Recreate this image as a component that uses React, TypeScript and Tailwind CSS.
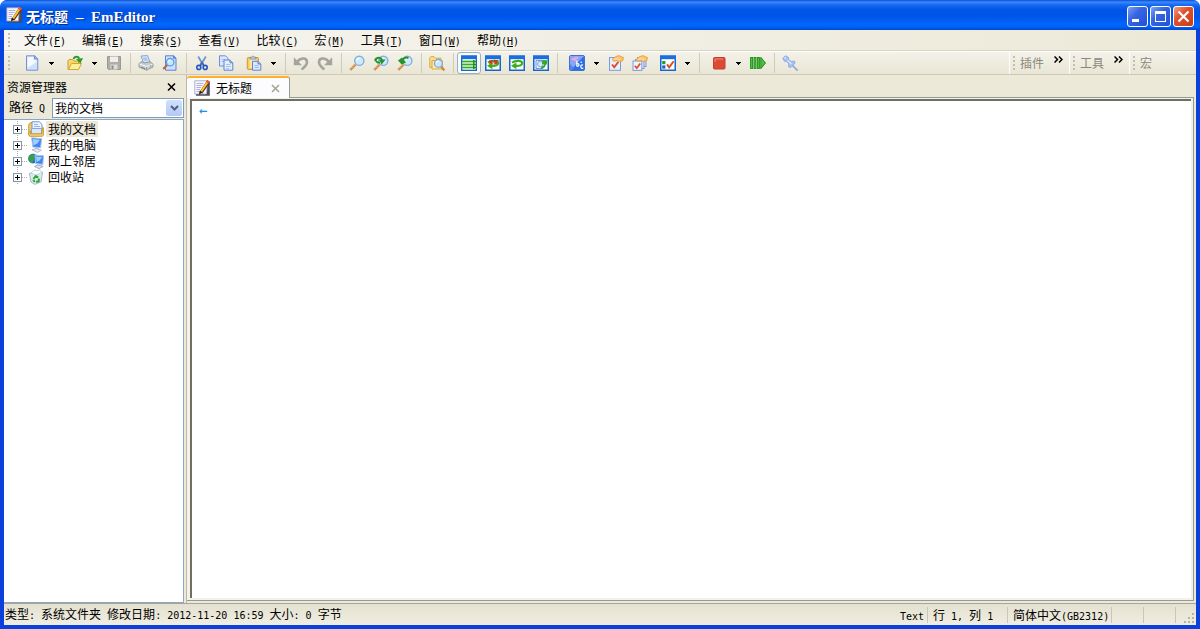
import React from "react";

type Kids = { children?: React.ReactNode };

function Svg({ children, size = 16 }: Kids & { size?: number }) {
  return (
    <svg width={size} height={size} viewBox="0 0 16 16" aria-hidden="true" className="shrink-0">
      {children}
    </svg>
  );
}

function AppIcon() {
  return (
    <Svg>
      <path d="M2 15.8 H15.8 V1.5 L13 1 V13.6 H2Z" fill="#4c4a58" />
      <path d="M.8 .8 H13.6 L12.4 14 H.8Z" fill="#f8f8ff" stroke="#a29cbc" strokeWidth=".8" />
      <path d="M2.5 3.5H9.5M2.5 5.5H8.5M2.5 7.5H7M2.5 9.5H6M2.5 11.5H5" stroke="#a9aee6" />
      <path d="M14.2 2 L7 12.6" stroke="#6c3010" strokeWidth="3.4" />
      <path d="M13.4 2.4 L7.2 11.4" stroke="#f8c62e" strokeWidth="1.9" />
      <path d="M12.6 .6 L15.4 2.6" stroke="#e8573c" strokeWidth="2.2" />
      <path d="M5.6 10.8 L8.2 12.8 L5 14.4Z" fill="#1a1a1a" />
    </Svg>
  );
}

function NewIcon() {
  return (
    <Svg>
      <path d="M2.5 .8 H10.5 L13.8 4 V15.2 H2.5Z" fill="#cfe0fd" stroke="#7394cf" />
      <path d="M3.5 2H9.5V5H12.5V7L3.5 13Z" fill="#f6faff" />
      <path d="M10.5 .8 V4 H13.8Z" fill="#a9c3f2" stroke="#7394cf" />
    </Svg>
  );
}

function OpenIcon() {
  return (
    <Svg>
      <path d="M1 14.5 V5.5 L2 4.5 H5.5 L7 6 H11.5 V14.5Z" fill="#f7d766" stroke="#c79f2e" />
      <path d="M1.5 14.5 L4.5 8.5 H14.5 L11.5 14.5Z" fill="#fdee9a" stroke="#cfa836" />
      <path d="M6.5 4 C7.5 1.2 11 .8 12.3 3.6" fill="none" stroke="#2d9a2a" strokeWidth="2" />
      <path d="M9 4 L16 3 L13.4 8.4Z" fill="#2d9a2a" />
    </Svg>
  );
}

function SaveIcon() {
  return (
    <Svg>
      <path d="M1.5 1.5 H14.5 V14.5 H2.5 L1.5 13.5Z" fill="#aeaea9" stroke="#9a9a95" />
      <path d="M4 1.5 H12 V7 H4Z" fill="#f0efea" />
      <path d="M4.5 9.5 H11.5 V14.5 H4.5Z" fill="#dedcd6" />
      <path d="M5.5 10.5 H7.5 V14 H5.5Z" fill="#8b8b87" />
    </Svg>
  );
}

function PrintIcon() {
  return (
    <Svg>
      <path d="M3 1 L9.5 .6 L12 7 L5.5 8Z" fill="#d6e8fc" stroke="#87a5cf" />
      <path d="M5 3.2H9M5.6 5H9.8" stroke="#8fb0dd" />
      <path d="M1 8.5 L4 6.5 L6 8 L12 6.8 L15 9 V12 L8.5 15.2 L1 12Z" fill="#c9cbcf" stroke="#96999f" />
      <path d="M1.5 9 L8.5 11.5 L14.5 9.2" fill="none" stroke="#f8f8f8" />
      <path d="M8.5 12 V14.5" stroke="#96999f" />
      <path d="M3 12.2 L7 13.6" stroke="#7c7f85" />
      <circle cx="12.5" cy="11" r=".8" fill="#5cb85c" />
    </Svg>
  );
}

function PreviewIcon() {
  return (
    <Svg>
      <path d="M3.5 .8 H11.5 L14 3.2 V15.2 H3.5Z" fill="#cfe0ff" stroke="#5d83cf" />
      <path d="M11.5 .8 V3.2 H14Z" fill="#8fb0ec" stroke="#5d83cf" />
      <path d="M1.2 14 L5.5 9.8" stroke="#b3683a" strokeWidth="2" />
      <circle cx="8.2" cy="7.2" r="3.7" fill="#c4eafc" stroke="#6a9cdc" strokeWidth="1.3" />
      <path d="M6.3 6.8 C6.5 5.6 7.5 5 8.6 5" fill="none" stroke="#fff" strokeWidth="1.2" />
    </Svg>
  );
}

function CutIcon() {
  return (
    <Svg>
      <path d="M4.2 1.5 L9.8 11 M11.8 1.5 L6.2 11" stroke="#6f97c8" strokeWidth="1.8" />
      <path d="M8 7 L10 10.8 M8 7 L6 10.8" stroke="#3a66b0" strokeWidth="1.6" />
      <circle cx="4.8" cy="12.4" r="2" fill="none" stroke="#2457c5" strokeWidth="1.6" />
      <circle cx="11.2" cy="12.4" r="2" fill="none" stroke="#2457c5" strokeWidth="1.6" />
    </Svg>
  );
}

function CopyIcon() {
  return (
    <Svg>
      <path d="M1.5 .8 H7.5 L10 3.3 V11 H1.5Z" fill="#dbe8ff" stroke="#6f90d6" />
      <path d="M3.5 4.5H7M3.5 6.5H6" stroke="#a9c1ef" />
      <path d="M6 5 H12 L14.8 7.8 V15.2 H6Z" fill="#e4eeff" stroke="#5f83cf" />
      <path d="M12 5 V7.8 H14.8" fill="#a9c1ef" stroke="#5f83cf" />
      <path d="M8 9.5H12.5M8 11.5H13M8 13.5H11" stroke="#a9c1ef" />
    </Svg>
  );
}

function PasteIcon() {
  return (
    <Svg>
      <rect x="1.3" y="2.5" width="11.2" height="12" rx="1" fill="#f4cc5c" stroke="#c99c3c" />
      <path d="M3.5 4 H10.5 V13 H3.5Z" fill="#fbe69c" />
      <path d="M4 4 V2.2 H5.6 L7 .8 L8.4 2.2 H10 V4Z" fill="#c9cdd6" stroke="#7d8596" strokeWidth=".8" />
      <path d="M6.5 6.3 H12 L14.8 9 V15.2 H6.5Z" fill="#dbe8ff" stroke="#5f83cf" />
      <path d="M12 6.3 V9 H14.8" fill="#a9c1ef" stroke="#5f83cf" />
      <path d="M8.5 10.5H12.5M8.5 12.5H13" stroke="#9cb8ec" />
    </Svg>
  );
}

function UndoIcon({ flip = false }: { flip?: boolean }) {
  return (
    <Svg>
      <g transform={flip ? "matrix(-1 0 0 1 16 0)" : undefined}>
        <path d="M4 7.5 C6.5 2.5 13.6 2.2 14 6.8 C14.2 10.5 11.5 12 8.6 14.4" fill="none" stroke="#a5a49e" strokeWidth="2.6" />
        <path d="M.8 2.2 V10.2 H9Z" fill="#a5a49e" />
      </g>
    </Svg>
  );
}

function Lens() {
  return (
    <>
      <path d="M1.2 14.8 L6.5 9.6" stroke="#d08a4a" strokeWidth="2.4" />
      <path d="M1.6 13.8 L5.8 9.6" stroke="#f4c490" strokeWidth=".8" />
      <circle cx="10.3" cy="5.8" r="4.6" fill="#cdeafd" stroke="#86aee2" strokeWidth="1.4" />
      <path d="M7.8 5.4 C8.1 3.8 9.4 3.2 10.6 3.3" fill="none" stroke="#fff" strokeWidth="1.4" />
    </>
  );
}

function FindIcon() {
  return <Svg><Lens /></Svg>;
}

function FindNextIcon() {
  return (
    <Svg>
      <Lens />
      <path d="M2 5.6 C3 2.4 7.6 1.4 9.2 5" fill="none" stroke="#25942a" strokeWidth="2" />
      <path d="M2.4 4.6 C3 7 5 8 7 7.4" fill="none" stroke="#25942a" strokeWidth="1.8" />
      <path d="M6 4.4 H12.6 L8.6 9.4Z" fill="#25942a" />
    </Svg>
  );
}

function FindPrevIcon() {
  return (
    <Svg>
      <Lens />
      <path d="M11.4 3 C8.4 1.8 5.8 3.4 5.4 6" fill="none" stroke="#25942a" strokeWidth="2" />
      <path d="M1 5.6 L5 2.6 L9 7.6 L4.6 9.6Z" fill="#25942a" />
    </Svg>
  );
}

function FindFilesIcon() {
  return (
    <Svg>
      <path d="M.8 12.5 V2.6 L1.8 1.6 H5 L6.4 3.2 H12 V12.5Z" fill="#fbe08a" stroke="#dba93c" />
      <path d="M3 14 V5.6 H13.4 V14Z" fill="#fdebae" stroke="#dba93c" />
      <path d="M15.4 15.4 L12 11.6" stroke="#c98448" strokeWidth="2.2" />
      <circle cx="9.4" cy="8.4" r="3.9" fill="#cdeafd" stroke="#7fa8de" strokeWidth="1.3" />
      <path d="M7.4 8 C7.6 6.8 8.6 6.2 9.6 6.2" fill="none" stroke="#fff" strokeWidth="1.2" />
    </Svg>
  );
}

function WindowBase({ children }: Kids) {
  return (
    <Svg>
      <rect x=".75" y="1.25" width="14.5" height="14" fill="#fff" stroke="#1765d0" strokeWidth="1.5" />
      <path d="M0 .5 H16 V4.2 H0Z" fill="#1a6ede" />
      {children}
    </Svg>
  );
}

function NoWrapIcon() {
  return (
    <WindowBase>
      <path d="M1.5 4.5 H14.5 V14.5 H1.5Z" fill="#d4f4cc" />
      <path d="M1 6.5 H15M1 9.5 H15M1 12.5 H15" stroke="#38a832" strokeWidth="1.3" />
      <path d="M12 4.7 L15.4 6.5 L12 8.2ZM12 7.8 L15.4 9.5 L12 11.2ZM12 10.8 L15.4 12.5 L12 14.2Z" fill="#1f8a24" />
    </WindowBase>
  );
}

function WrapArrow() {
  return (
    <>
      <path d="M3 7.6 C6.5 5.2 13 5.2 13.2 8.2 C13.2 10.6 10 11 6.5 10.8" fill="none" stroke="#3cae1e" strokeWidth="2.2" />
      <path d="M2 10.8 L7.4 7.4 V14.2Z" fill="#3cae1e" />
    </>
  );
}

function WrapCharsIcon() {
  return (
    <WindowBase>
      <WrapArrow />
      <path d="M4.5 5.5 L7.4 8.8M7.4 5.5 L4.5 8.8M8.8 5.6 H12 L9.8 7 C12.4 7 12.4 9 8.8 8.8" fill="none" stroke="#d2301c" strokeWidth="1.3" />
    </WindowBase>
  );
}

function WrapWindowIcon() {
  return <WindowBase><WrapArrow /></WindowBase>;
}

function WrapPageIcon() {
  return (
    <WindowBase>
      <path d="M3 5.4 H9.5 V13.6 H3Z" fill="#e7efff" stroke="#6c8fd6" />
      <circle cx="7.4" cy="9" r="2.8" fill="#cdeafd" stroke="#7fa8de" />
      <path d="M8.2 13 C10.8 12.4 12.2 10.8 12 8" fill="none" stroke="#38a820" strokeWidth="1.9" />
      <path d="M9 9 L9.6 5 L14.4 5.2 L13.8 9.6Z" fill="#38a820" />
    </WindowBase>
  );
}

function ConfigIcon() {
  return (
    <Svg>
      <rect x=".5" y=".5" width="15" height="15" rx="1.5" fill="#2c70e6" stroke="#3a72d8" />
      <path d="M1 1 H15 L9 7 L4 13 H1Z" fill="#8ea4f2" />
      <path d="M2.5 3 H5.5 V1.8 H9 V4 H7 V6 H4.5 V5 H2.5Z" fill="#dcaae4" />
      <path d="M1 9 L5 13 L3 15 H1Z" fill="#4f86ee" />
      <path d="M7.8 5.5 V11.5 M7.8 9 C10.4 7.4 11 11.6 7.8 11.2 M14 10 C11 9.2 11 14 14.2 13.2 M12.2 6.4 V8" fill="none" stroke="#fff" strokeWidth="1.2" />
    </Svg>
  );
}

function Hand() {
  return (
    <>
      <path d="M4 4.6 L7.6 1.6 L11 .6 L15.6 2.6 L14.6 6 L11.5 6.6 L9.5 5.2 L6 6.4Z" fill="#fcc56c" stroke="#e09a3c" strokeWidth=".8" />
      <path d="M6 4.6 L9.5 3 M9.5 4.8 L12 4" stroke="#fde6b4" />
    </>
  );
}

function PropsIcon() {
  return (
    <Svg>
      <rect x="1.5" y="2.5" width="11" height="12.8" fill="#e6efff" stroke="#7b9ade" />
      <path d="M4 9.5 L6.3 12.3 L10.4 6.8" fill="none" stroke="#e04a20" strokeWidth="1.9" />
      <Hand />
    </Svg>
  );
}

function AllPropsIcon() {
  return (
    <Svg>
      <rect x="5.5" y="2.5" width="8.5" height="9" fill="#dbe6fc" stroke="#7b9ade" />
      <rect x="3.5" y="4.5" width="8.5" height="9" fill="#dbe6fc" stroke="#7b9ade" />
      <rect x="1" y="6" width="8.8" height="9.4" fill="#eef4ff" stroke="#7b9ade" />
      <path d="M2.8 10.8 L4.8 13.2 L8.2 8.4" fill="none" stroke="#e04a20" strokeWidth="1.7" />
      <Hand />
    </Svg>
  );
}

function CustomizeIcon() {
  return (
    <WindowBase>
      <rect x="2.2" y="6" width="3.2" height="3.2" fill="#1d9c2a" />
      <rect x="2.2" y="10.4" width="3.2" height="3.2" fill="#1765d0" />
      <path d="M7 9.4 L9.2 12.4 L13.6 6.2" fill="none" stroke="#e04a20" strokeWidth="1.9" />
    </WindowBase>
  );
}

function RecordIcon() {
  return (
    <Svg>
      <rect x="2.5" y="2.5" width="11.5" height="11.5" rx="1" fill="#dc4a34" stroke="#c0402c" />
      <path d="M4 7 V4 H12" fill="none" stroke="#f08c78" />
    </Svg>
  );
}

function RunIcon() {
  return (
    <Svg>
      <rect x=".6" y="2.5" width="2" height="11" fill="#4fc43c" stroke="#1f8a1c" strokeWidth=".9" />
      <rect x="4" y="2.5" width="2" height="11" fill="#4fc43c" stroke="#1f8a1c" strokeWidth=".9" />
      <rect x="7.4" y="2.5" width="2" height="11" fill="#4fc43c" stroke="#1f8a1c" strokeWidth=".9" />
      <path d="M10.8 2.3 L15.5 8 L10.8 13.7Z" fill="#4fc43c" stroke="#1f8a1c" />
    </Svg>
  );
}

function PinIcon() {
  return (
    <Svg>
      <path d="M10 10 L15.6 15.6" stroke="#8fa6cf" strokeWidth="1.6" />
      <path d="M.8 3.2 L3.6 .8 L6.6 2.6 L6.2 4.4 L9.4 6.4 L12.4 6.2 L13.2 8 L8.6 12.6 L6.6 11.8 L6.8 8.8 L4.4 6.4 L2.4 6.2Z" fill="#a5c2f6" stroke="#86a6e4" strokeWidth=".9" />
      <path d="M2.6 3.4 L4 2.2 M5.6 5.4 L9.4 9" stroke="#e3edff" strokeWidth="1.3" />
    </Svg>
  );
}

function DocumentsIcon() {
  return (
    <Svg>
      <path d="M.8 14 V3.5 L2.6 1.6 H5 V14Z" fill="#f5cf62" stroke="#c4942a" />
      <path d="M4 .8 H11.4 L14 3.4 V10 H4Z" fill="#eef5ff" stroke="#6f94cf" />
      <path d="M6 3.5H10M6 5.5H12" stroke="#8fb3ea" />
      <path d="M3.5 7.5 H13.5 V13 H3.5Z" fill="#d8e8fc" stroke="#86a8dc" />
      <path d="M.8 11.5 L2.5 10 V12.8 H14 V7.5 L15.4 6.5 V14 L14.4 15.3 H1.6 L.8 14Z" fill="#f8d268" stroke="#c4942a" strokeWidth=".9" />
    </Svg>
  );
}

function ComputerIcon() {
  return (
    <Svg>
      <path d="M3.6 .8 L13.6 1.6 L12.6 10.8 L4.8 10Z" fill="#3f86f0" stroke="#b0c2e4" />
      <path d="M4.8 2 L12 2.8 L9.4 6.6 L5.4 8.4Z" fill="#9ccfff" />
      <path d="M7.2 10.6 L10.8 10.9 V12.4 H7.2Z" fill="#c5cbd8" />
      <path d="M4 12.8 L8 11.6 L13.5 13.2 L9.5 15.4Z" fill="#e8ecf4" stroke="#a4b0c6" strokeWidth=".8" />
    </Svg>
  );
}

function NetworkIcon() {
  return (
    <Svg>
      <circle cx="5" cy="5.6" r="4.9" fill="#2374d0" />
      <path d="M1 4 C3 .6 6.4 1 7 3.6 C5 5.5 6.4 8 3.8 10 C1.6 8.6 .4 6.4 1 4Z" fill="#38a636" />
      <path d="M7 2 L15.6 2.8 L14.8 11.4 L7.6 10.6Z" fill="#3f86f0" stroke="#b2c4e4" />
      <path d="M8 3.4 L14.2 4 L11.4 7.8 L8.6 9Z" fill="#9ccfff" />
      <path d="M6.5 13.4 L10 12 L15.2 13.4 L11 15.6Z" fill="#e0e5ef" stroke="#8c9ab4" strokeWidth=".8" />
    </Svg>
  );
}

function RecycleIcon() {
  return (
    <Svg>
      <path d="M1.4 4.5 L8 3 L14.6 3 L13 12.8 L6.8 15.4 L3 13Z" fill="#d9edf0" stroke="#a4bac8" />
      <path d="M3 4 L6.6 .8 L9 1.8 L12 .8 L13.8 3.6 L8 6.2Z" fill="#fff" stroke="#b9cad4" strokeWidth=".8" />
      <path d="M5.4 10 L7.8 7 L10.2 8.6 M11 9.6 L10.6 12.4 L8 12.8 M6.8 13 L5.2 11" fill="none" stroke="#2fa52e" strokeWidth="2" />
    </Svg>
  );
}

function Caret() {
  return (
    <svg width="5" height="3" viewBox="0 0 5 3" aria-hidden="true">
      <path d="M0 0H5V1H4V2H3V3H2V2H1V1H0Z" fill="#000" />
    </svg>
  );
}

function Grip() {
  return (
    <svg width="2" height="14" viewBox="0 0 2 14" aria-hidden="true" className="shrink-0">
      {[0, 4, 8, 12].map((y) => (
        <rect key={y} x="0" y={y} width="2" height="2" fill="#c2bfb2" />
      ))}
    </svg>
  );
}

function Tool({ label, children, on = false }: Kids & { label: string; on?: boolean }) {
  return (
    <button
      type="button"
      aria-label={label}
      aria-pressed={on || undefined}
      className={
        on
          ? "flex h-[22px] w-6 items-center justify-center rounded-[3px] border border-[#98b0c8] bg-[#fbfbf8]"
          : "flex h-[22px] w-6 items-center justify-center"
      }
    >
      {children}
    </button>
  );
}

function Split({ label, children }: Kids & { label: string }) {
  return (
    <div className="flex pr-px pl-1">
      <Tool label={label}>{children}</Tool>
      <button type="button" aria-label={label + "选项"} className="flex w-[14px] items-center justify-center">
        <Caret />
      </button>
    </div>
  );
}

function Sep() {
  return (
    <div className="flex w-2 justify-center">
      <div className="h-5 w-px bg-[#cfccbc]" />
    </div>
  );
}

function Latin({ children }: Kids) {
  return <span className="font-['DejaVu_Sans_Mono',monospace] text-[10px]">{children}</span>;
}

const menus: [string, string][] = [
  ["文件", "F"],
  ["编辑", "E"],
  ["搜索", "S"],
  ["查看", "V"],
  ["比较", "C"],
  ["宏", "M"],
  ["工具", "T"],
  ["窗口", "W"],
  ["帮助", "H"],
];

const places = [
  { name: "我的文档", icon: <DocumentsIcon />, selected: true },
  { name: "我的电脑", icon: <ComputerIcon />, selected: false },
  { name: "网上邻居", icon: <NetworkIcon />, selected: false },
  { name: "回收站", icon: <RecycleIcon />, selected: false },
];

function TitleBar() {
  return (
    <header className="flex h-[30px] shrink-0 items-center rounded-t-[7px] bg-[linear-gradient(to_bottom,#0a4bd0_0px,#3a8bff_2px,#1668f2_5px,#0055e5_10px,#0056ea_17px,#0066fb_24px,#0062f6_27px,#0046d0_30px)] pr-[6px] pl-[6px] text-white">
      <AppIcon />
      <h1 className="flex-1 pt-[2px] pl-1 leading-4 font-bold [text-shadow:1px_1px_0_#0a2f8c]">
        <span className="text-[14px]">无标题</span>
        <span className="pl-2 font-['Liberation_Serif',serif] text-[15px]">–&nbsp; EmEditor</span>
      </h1>
      <div className="flex gap-[2px] pt-[2px]">
        <button type="button" aria-label="最小化" className="h-[21px] w-[21px] rounded-[3px] border border-white bg-[linear-gradient(135deg,#7ea2f4,#3565e2_40%,#2450d8)]">
          <svg width="19" height="19" viewBox="0 0 19 19" aria-hidden="true"><path d="M4 12H11V15H4Z" fill="#fff" /></svg>
        </button>
        <button type="button" aria-label="最大化" className="h-[21px] w-[21px] rounded-[3px] border border-white bg-[linear-gradient(135deg,#7ea2f4,#3565e2_40%,#2450d8)]">
          <svg width="19" height="19" viewBox="0 0 19 19" aria-hidden="true"><path d="M4 4H15V15H4ZM5 7V14H14V7Z" fill="#fff" fillRule="evenodd" /></svg>
        </button>
        <button type="button" aria-label="关闭" className="h-[21px] w-[21px] rounded-[3px] border border-white bg-[linear-gradient(135deg,#f0a088,#e0502c_40%,#cc3c16)]">
          <svg width="19" height="19" viewBox="0 0 19 19" aria-hidden="true"><path d="M4.5 4.5L14.5 14.5M14.5 4.5L4.5 14.5" stroke="#fff" strokeWidth="2.2" /></svg>
        </button>
      </div>
    </header>
  );
}

function MenuBar() {
  return (
    <nav className="flex h-[21px] shrink-0 items-center border-b border-[#d8d4c2] bg-linear-to-r from-[#f6f5f1] to-[#ece9d8] pl-1">
      <div className="flex w-2">
        <Grip />
      </div>
      {menus.map(([name, key]) => (
        <button type="button" key={key} className="h-5 px-2 pt-px whitespace-nowrap">
          {name}
          <Latin>
            (<u>{key}</u>)
          </Latin>
        </button>
      ))}
    </nav>
  );
}

function Band({ label, more = false }: { label: string; more?: boolean }) {
  return (
    <div className={more ? "flex w-[60px] items-center border-l border-white pl-[3px]" : "flex w-[67px] items-center border-l border-white pl-[3px]"}>
      <Grip />
      <span className="flex-1 pl-[5px] text-[#8a887b]">{label}</span>
      {more && (
        <button type="button" aria-label={label + "更多"} className="flex self-start pt-1 pr-[6px]">
          <svg width="9" height="7" viewBox="0 0 9 7" aria-hidden="true">
            <path d="M.5 .5L3.5 3.5L.5 6.5M5 .5L8 3.5L5 6.5" fill="none" stroke="#000" strokeWidth="1.5" />
          </svg>
        </button>
      )}
    </div>
  );
}

function ToolBar() {
  return (
    <div className="flex h-6 shrink-0 border-t border-b border-t-white border-b-[#cdc9b6] bg-linear-to-b from-[#f4f2e9] to-[#e9e6d5]">
      <div role="toolbar" aria-label="标准" className="flex flex-1 items-center pl-1">
        <div className="flex w-2">
          <Grip />
        </div>
        <Split label="新建"><NewIcon /></Split>
        <Split label="打开"><OpenIcon /></Split>
        <Tool label="保存"><SaveIcon /></Tool>
        <Sep />
        <Tool label="打印"><PrintIcon /></Tool>
        <Tool label="打印预览"><PreviewIcon /></Tool>
        <Sep />
        <Tool label="剪切"><CutIcon /></Tool>
        <Tool label="复制"><CopyIcon /></Tool>
        <Split label="粘贴"><PasteIcon /></Split>
        <Sep />
        <Tool label="撤销"><UndoIcon /></Tool>
        <Tool label="重做"><UndoIcon flip /></Tool>
        <Sep />
        <Tool label="查找"><FindIcon /></Tool>
        <Tool label="查找下一个"><FindNextIcon /></Tool>
        <Tool label="查找上一个"><FindPrevIcon /></Tool>
        <Sep />
        <Tool label="在文件中查找"><FindFilesIcon /></Tool>
        <Sep />
        <Tool label="不换行" on><NoWrapIcon /></Tool>
        <Tool label="按字符换行"><WrapCharsIcon /></Tool>
        <Tool label="按窗口换行"><WrapWindowIcon /></Tool>
        <Tool label="按页面换行"><WrapPageIcon /></Tool>
        <Sep />
        <Split label="配置"><ConfigIcon /></Split>
        <Tool label="当前配置属性"><PropsIcon /></Tool>
        <Tool label="所有配置属性"><AllPropsIcon /></Tool>
        <Split label="自定义"><CustomizeIcon /></Split>
        <Sep />
        <Split label="录制宏"><RecordIcon /></Split>
        <Tool label="运行宏"><RunIcon /></Tool>
        <Sep />
        <Tool label="总在最前"><PinIcon /></Tool>
      </div>
      <Band label="插件" more />
      <Band label="工具" more />
      <Band label="宏" />
    </div>
  );
}

function Explorer() {
  return (
    <aside className="flex w-[180px] shrink-0 flex-col">
      <div className="flex h-[23px] items-center justify-between pr-2 pl-[3px]">
        <h2>资源管理器</h2>
        <button type="button" aria-label="关闭资源管理器">
          <svg width="9" height="8" viewBox="0 0 9 8" aria-hidden="true">
            <path d="M1 .5L8 7.5M8 .5L1 7.5" stroke="#000" strokeWidth="1.5" />
          </svg>
        </button>
      </div>
      <div className="flex h-5 items-center">
        <label htmlFor="path" className="w-12 overflow-hidden pl-[5px] whitespace-pre">
          路径<Latin> Q</Latin>
        </label>
        <div className="relative h-5 flex-1">
          <select id="path" className="h-full w-full appearance-none border border-[#7f9db9] bg-white px-[2px]">
            <option>我的文档</option>
          </select>
          <span className="pointer-events-none absolute top-[2px] right-[2px] flex h-4 w-4 items-center justify-center rounded-[2px] bg-linear-to-b from-[#d3e0fc] to-[#b3c8f6]">
            <svg width="9" height="6" viewBox="0 0 9 6" aria-hidden="true">
              <path d="M1 1L4.5 4.5L8 1" fill="none" stroke="#4d6185" strokeWidth="2" />
            </svg>
          </span>
        </div>
      </div>
      <ul role="tree" aria-label="文件夹" className="mt-px flex-1 border border-l-0 border-[#8aa6c8] bg-white py-px">
        {places.map((p) => (
          <li key={p.name} role="treeitem" aria-selected={p.selected} className="flex h-4 items-center pl-2">
            <svg width="16" height="16" viewBox="0 0 16 16" aria-hidden="true">
              <path d="M5.5 0V16M10 8.5H16" stroke="#b0ada0" strokeDasharray="1 1" />
              <rect x="1.5" y="4.5" width="8" height="8" fill="#fff" stroke="#8296b0" />
              <path d="M3 8.5H8M5.5 6V11" stroke="#000" />
            </svg>
            {p.icon}
            <span className={p.selected ? "ml-[2px] bg-[#ece9d8] px-[2px] leading-4" : "ml-[2px] px-[2px] leading-4"}>{p.name}</span>
          </li>
        ))}
      </ul>
    </aside>
  );
}

function EditorPane() {
  return (
    <main className="flex min-w-0 flex-1 flex-col border-l border-[#bdb9a8] pr-[2px] pb-[2px]">
      <div role="tablist" className="flex h-[23px] shrink-0 items-end border-b border-[#919b9c]">
        <div className="-mb-px flex h-[22px] items-center rounded-t-[3px] border-t-2 border-r border-[#919b9c] border-t-[#ffb02c] bg-[#fcfcfe] pr-[9px] pl-[7px]">
          <button type="button" role="tab" aria-selected="true" className="flex items-center gap-[6px]">
            <AppIcon />
            无标题
          </button>
          <button type="button" aria-label="关闭标签" className="pl-[19px]">
            <svg width="9" height="9" viewBox="0 0 9 9" aria-hidden="true">
              <path d="M1 1L8 8M8 1L1 8" stroke="#a5a294" strokeWidth="1.5" />
            </svg>
          </button>
        </div>
      </div>
      <div className="flex flex-1 border-r border-b border-[#919b9c] bg-[#f4f2e8] pt-px pr-[2px] pb-[2px] pl-[3px]">
        <textarea
          aria-label="文本"
          placeholder="←"
          className="flex-1 resize-none border-t-2 border-l-2 border-[#716f64] bg-white px-[7px] py-px font-['DejaVu_Sans_Mono',monospace] text-[14px] leading-4 outline-none placeholder:text-[#1e8fe8] placeholder:opacity-100"
        />
      </div>
    </main>
  );
}

function StatusBar() {
  return (
    <footer className="flex h-[22px] shrink-0 items-center border-t border-[#a8a594] bg-linear-to-b from-[#e4e1d0] to-[#f0eee2] whitespace-pre">
      <p className="flex-1 pl-px">
        类型<Latin>: </Latin>系统文件夹<Latin> </Latin>修改日期<Latin>: 2012-11-20 16:59 </Latin>大小<Latin>: 0 </Latin>字节
      </p>
      <div className="h-4 border-r border-[#c9c6b5] pr-[3px]"><Latin>Text</Latin></div>
      <div className="h-4 w-20 border-r border-[#c9c6b5] pl-[5px]">
        行<Latin> 1, </Latin>列<Latin> 1</Latin>
      </div>
      <div className="h-4 w-[104px] border-r border-[#c9c6b5] pl-[5px]">
        简体中文<Latin>(GB2312)</Latin>
      </div>
      <div className="h-4 w-8 border-r border-[#c9c6b5]" />
      <div className="h-4 w-8 border-r border-[#c9c6b5]" />
      <div className="flex w-5 items-end justify-end self-stretch p-px">
        <svg width="11" height="11" viewBox="0 0 11 11" aria-hidden="true">
          <path d="M8 0h2v2h-2zM8 4h2v2h-2zM8 8h2v2h-2zM4 4h2v2h-2zM4 8h2v2h-2zM0 8h2v2h-2z" fill="#b8b4a2" />
        </svg>
      </div>
    </footer>
  );
}

export default function App() {
  return (
    <div className="flex h-screen flex-col overflow-hidden rounded-t-[7px] bg-[#0a4fe0] font-['Noto_Sans_CJK_SC',sans-serif] text-[12px] leading-4 text-black">
      <TitleBar />
      <div className="flex min-h-0 flex-1 flex-col border-r-4 border-b-4 border-l-4 border-[#0b40dc] bg-[#ece9d8]">
        <MenuBar />
        <ToolBar />
        <div className="flex min-h-0 flex-1">
          <Explorer />
          <div className="w-[2px] shrink-0" />
          <EditorPane />
        </div>
        <StatusBar />
      </div>
    </div>
  );
}
